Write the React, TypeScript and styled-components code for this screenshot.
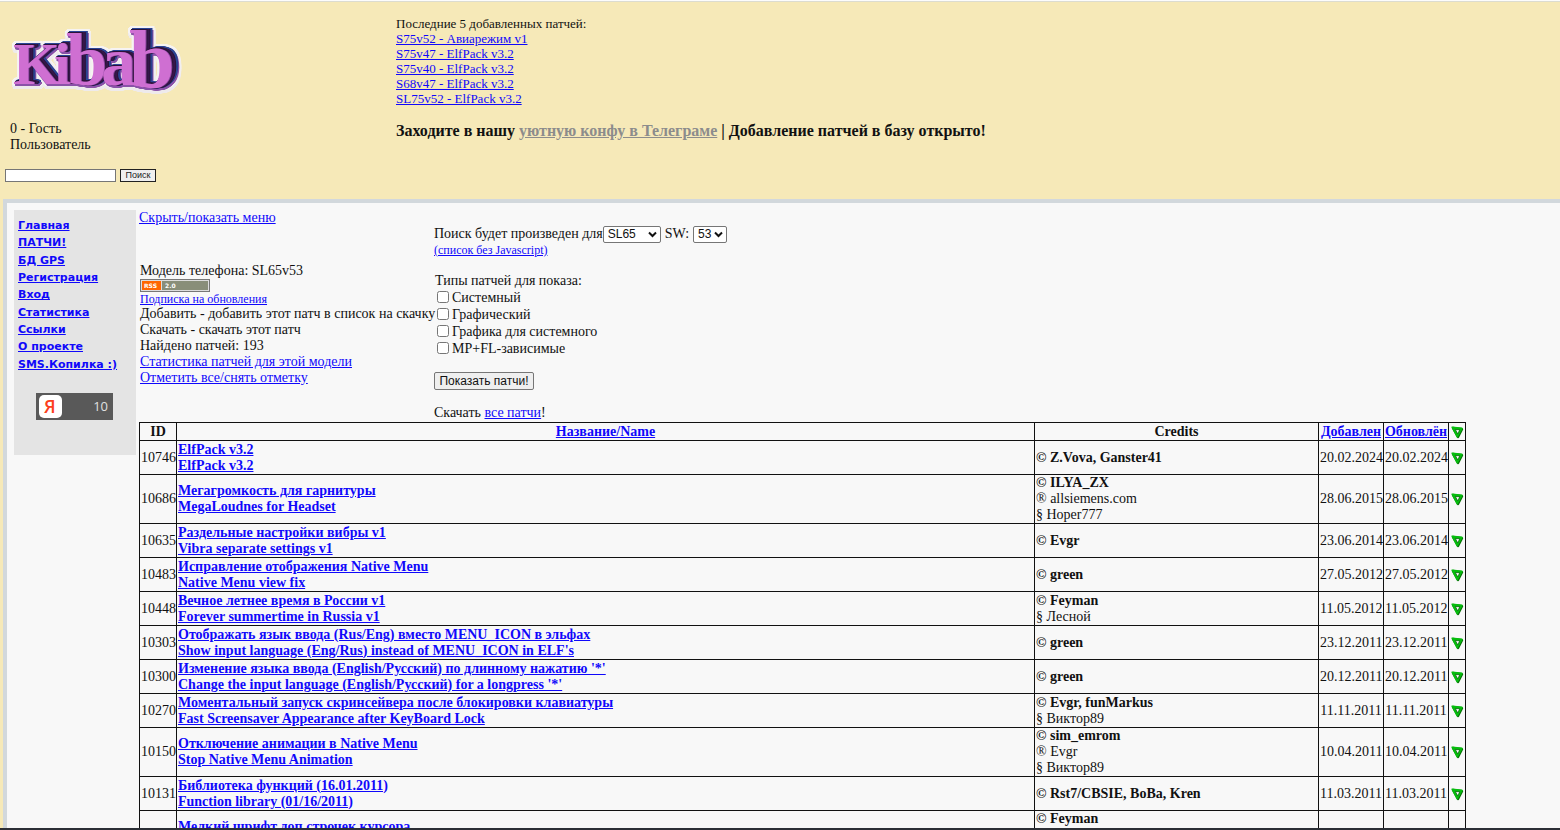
import React from "react";
import styled, { createGlobalStyle } from "styled-components";

const GlobalStyle = createGlobalStyle`
  * { box-sizing: border-box; }
  body {
    margin: 0;
    background: #f6e9b8;
    color: #111;
    font: 14px/16px "Liberation Serif", "Times New Roman", serif;
  }
`;

const Page = styled.div`
  height: 100vh;
  overflow: hidden;
  display: flex;
  flex-direction: column;
  border-top: 1px solid #fcfcfc;
  border-bottom: 2px solid #2c2f36;
`;

const Header = styled.header`
  flex: none;
  display: grid;
  grid-template-columns: 396px 1fr;
  height: 198px;
  border-top: 1px solid #dcdcd0;
`;

const Brand = styled.div`
  display: flex;
  flex-direction: column;
  align-items: flex-start;
  padding: 18px 0 0 5px;
`;

/* Stacked shadows build the dark side of the letters, then the pale halo. */
const LogoMark = styled.svg`
  display: block;
  overflow: visible;
  filter: drop-shadow(1px 0 0 #8a479f) drop-shadow(1px -1px 0 #2b1238)
    drop-shadow(2px 0 0 #35164a) drop-shadow(1px 0 0 #2b1238)
    drop-shadow(1px -1px 0 #2a4596) drop-shadow(1px 0 0 #2a3f8c)
    drop-shadow(1px 2px 0 #8a52a8)
    drop-shadow(2px 0 0 #f1eef0) drop-shadow(-2px 0 0 #f6f3f2)
    drop-shadow(0 3px 0 #eeeaec) drop-shadow(0 -2px 0 #f6f3f2);
`;

const User = styled.p`
  margin: 18px 0 16px 5px;
`;

const SearchForm = styled.form`
  display: flex;
  gap: 4px;
`;

const SearchInput = styled.input`
  width: 111px;
  height: 13px;
  padding: 0 2px;
  border: 1px solid #767676;
  background: #fff;
  font: 9px "Liberation Sans", Arial, sans-serif;
`;

const SearchButton = styled.button`
  width: 36px;
  height: 13px;
  padding: 0;
  border: 1px solid #222;
  background: #efefef;
  color: #222;
  font: 9px/11px "Liberation Sans", Arial, sans-serif;
`;

const News = styled.div`
  padding-top: 14px;
  font-size: 13px;
  line-height: 15px;
`;

const NewsList = styled.ul`
  margin: 0;
  padding: 0;
  list-style: none;
`;

const Link = styled.a<{ $color?: string }>`
  color: ${(p) => p.$color ?? "#1008fb"};
  text-decoration: underline;
`;

const Announcement = styled.h3`
  margin: 16px 0 0;
  font-size: 16px;
  line-height: 18px;
`;

const Frame = styled.div`
  flex: 1;
  min-height: 0;
  margin-left: 3px;
  padding: 7px 0 0 7px;
  display: grid;
  grid-template-columns: 122px 1fr;
  gap: 3px;
  align-items: start;
  border-top: 4px solid #d2d8dc;
  border-left: 4px solid #d2d8dc;
  background: #f8f8f8;
`;

const Sidebar = styled.nav`
  height: 245px;
  padding: 7px 4px;
  background: #e4e4e4;
`;

const Menu = styled.ul`
  display: grid;
  grid-auto-rows: 1fr;
  height: 156px;
  margin: 0 0 20px;
  padding: 0;
  list-style: none;
  font: bold 11px/17px Verdana, "DejaVu Sans", sans-serif;
  white-space: nowrap;
`;

const Counter = styled.a`
  display: block;
  width: 77px;
  height: 27px;
  margin-left: 18px;
`;

const Main = styled.main`
  margin-right: 94px;
`;

const Intro = styled.div`
  display: grid;
  grid-template-columns: 295px 1fr;
`;

const Info = styled.div`
  white-space: nowrap;
`;

const Details = styled.div`
  display: flex;
  flex-direction: column;
  align-items: flex-start;
  padding: 37px 0 0 1px;
`;

const RssLink = styled.a`
  display: block;
  height: 13px;
`;

const SmallLink = styled(Link)`
  font-size: 12px;
  line-height: 14px;
`;

const Filters = styled.form`
  display: flex;
  flex-direction: column;
  align-items: flex-start;
  padding-top: 15px;
`;

const ModelRow = styled.div`
  display: flex;
  align-items: center;
  height: 18px;
`;

const SelectBox = styled.span<{ $width: number }>`
  position: relative;
  display: flex;
  width: ${(p) => p.$width}px;
  height: 17px;
`;

const Select = styled.select`
  appearance: none;
  width: 100%;
  padding: 0 0 0 4px;
  border: 1px solid #767676;
  border-radius: 2px;
  background: #fff;
  color: #111;
  font: 12px/15px "Liberation Sans", Arial, sans-serif;
`;

const Chevron = styled.svg`
  position: absolute;
  top: 5px;
  right: 4px;
  pointer-events: none;
`;

const SoftwareLabel = styled.label`
  margin: 0 4px;
`;

const Types = styled.fieldset`
  margin: 16px 0 15px;
  padding: 0;
  border: 0;
`;

const Legend = styled.legend`
  padding: 0 1px;
`;

const Check = styled.label`
  display: flex;
  align-items: center;
  gap: 3px;
  height: 17px;
`;

const Checkbox = styled.input`
  width: 12px;
  height: 12px;
  margin: 0 0 2px 3px;
`;

const ShowButton = styled.button`
  width: 100px;
  height: 18px;
  padding: 0;
  border: 1px solid #767676;
  border-radius: 2px;
  background: #efefef;
  color: #111;
  font: 12px/14px "Liberation Sans", Arial, sans-serif;
`;

const DownloadAll = styled.p`
  margin: 15px 0 1px;
`;

const Table = styled.table`
  width: 100%;
  table-layout: fixed;
  border-collapse: collapse;
`;

const Col = styled.col<{ $width?: string }>`
  width: ${(p) => p.$width ?? "auto"};
`;

const Row = styled.tr<{ $head?: boolean }>`
  height: ${(p) => (p.$head ? 18 : 34)}px;
`;

const Cell = styled.td<{ $center?: boolean }>`
  padding: 0 1px;
  border: 1px solid #111;
  white-space: nowrap;
  text-align: ${(p) => (p.$center ? "center" : "left")};
`;

const HeadCell = styled.th`
  padding: 0;
  border: 1px solid #111;
`;

const Line = styled.div<{ $bold?: boolean }>`
  font-weight: ${(p) => (p.$bold ? "bold" : "normal")};
`;

const Icon = styled.svg`
  display: block;
  margin: 0 auto;
`;

const latest = [
  "S75v52 - Авиарежим v1",
  "S75v47 - ElfPack v3.2",
  "S75v40 - ElfPack v3.2",
  "S68v47 - ElfPack v3.2",
  "SL75v52 - ElfPack v3.2",
];

const menu = ["Главная", "ПАТЧИ!", "БД GPS", "Регистрация", "Вход", "Статистика", "Ссылки", "О проекте", "SMS.Копилка :)"];

const types = ["Системный", "Графический", "Графика для системного", "MP+FL-зависимые"];

interface Patch {
  id: number;
  ru: string;
  en: string;
  author: string;
  extra?: string[];
  added: string;
}

const patches: Patch[] = [
  { id: 10746, ru: "ElfPack v3.2", en: "ElfPack v3.2", author: "Z.Vova, Ganster41", added: "20.02.2024" },
  { id: 10686, ru: "Мегагромкость для гарнитуры", en: "MegaLoudnes for Headset", author: "ILYA_ZX", extra: ["® allsiemens.com", "§ Hoper777"], added: "28.06.2015" },
  { id: 10635, ru: "Раздельные настройки вибры v1", en: "Vibra separate settings v1", author: "Evgr", added: "23.06.2014" },
  { id: 10483, ru: "Исправление отображения Native Menu", en: "Native Menu view fix", author: "green", added: "27.05.2012" },
  { id: 10448, ru: "Вечное летнее время в России v1", en: "Forever summertime in Russia v1", author: "Feyman", extra: ["§ Лесной"], added: "11.05.2012" },
  { id: 10303, ru: "Отображать язык ввода (Rus/Eng) вместо MENU_ICON в эльфах", en: "Show input language (Eng/Rus) instead of MENU_ICON in ELF's", author: "green", added: "23.12.2011" },
  { id: 10300, ru: "Изменение языка ввода (English/Русский) по длинному нажатию '*'", en: "Change the input language (English/Русский) for a longpress '*'", author: "green", added: "20.12.2011" },
  { id: 10270, ru: "Моментальный запуск скринсейвера после блокировки клавиатуры", en: "Fast Screensaver Appearance after KeyBoard Lock", author: "Evgr, funMarkus", extra: ["§ Виктор89"], added: "11.11.2011" },
  { id: 10150, ru: "Отключение анимации в Native Menu", en: "Stop Native Menu Animation", author: "sim_emrom", extra: ["® Evgr", "§ Виктор89"], added: "10.04.2011" },
  { id: 10131, ru: "Библиотека функций (16.01.2011)", en: "Function library (01/16/2011)", author: "Rst7/CBSIE, BoBa, Kren", added: "11.03.2011" },
  { id: 10127, ru: "Мелкий шрифт доп строчек курсора", en: "Small font of cursor lines", author: "Feyman", extra: ["® Evgr", "§ Виктор89"], added: "09.03.2011" },
];

const letters = [
  { ch: "K", x: 8, y: 64, size: 60 },
  { ch: "i", x: 49, y: 64, size: 60 },
  { ch: "b", x: 61, y: 65, size: 74 },
  { ch: "a", x: 96, y: 65, size: 70 },
  { ch: "b", x: 124, y: 67, size: 82 },
];

function Logo() {
  return (
    <LogoMark width="182" height="83" viewBox="0 0 182 83" role="img" aria-label="Kibab">
      <text fontFamily="Liberation Serif, serif" fontWeight="bold" fill="#cf6fd2">
        {letters.map((l, i) => (
          <tspan key={i} x={l.x} y={l.y} fontSize={l.size}>{l.ch}</tspan>
        ))}
      </text>
    </LogoMark>
  );
}

function PatchMark() {
  return (
    <Icon width="14" height="14" viewBox="0 0 14 14" aria-hidden>
      <path d="M3 3 L12 4.2 L8 12 Z" fill="none" stroke="#067006" strokeWidth="2.4" strokeLinejoin="round" />
      <path d="M2.2 2.2 L11.8 3.4 L7.2 11.6 Z" fill="#06bd0e" stroke="#06bd0e" strokeWidth="1.6" strokeLinejoin="round" />
      <path d="M5.4 4.4 L9.8 4.9 L7.6 8.8 Z" fill="#fff" stroke="#075507" strokeWidth="0.7" />
    </Icon>
  );
}

function RssBadge() {
  return (
    <svg width="70" height="13" viewBox="0 0 70 13" role="img" aria-label="RSS 2.0">
      <rect x="0.5" y="0.5" width="69" height="12" fill="#ddd" stroke="#777" />
      <rect x="2" y="2" width="19" height="9" fill="#ff6600" />
      <rect x="22" y="2" width="46" height="9" fill="#898e79" />
      <g fill="#fff" fontFamily="DejaVu Sans, sans-serif" fontSize="6" fontWeight="bold">
        <text x="4" y="9">RSS</text>
        <text x="25" y="9">2.0</text>
      </g>
    </svg>
  );
}

function YandexCounter() {
  return (
    <svg width="77" height="27" viewBox="0 0 77 27" role="img" aria-label="Яндекс 10">
      <rect width="77" height="27" fill="#595959" />
      <rect x="3" y="2" width="23" height="23" rx="5" fill="#fff" />
      <text x="8" y="20" fill="#fc3f1d" fontFamily="Open Sans, sans-serif" fontSize="18" fontWeight="600">Я</text>
      <text x="72" y="18" textAnchor="end" fill="#e0e0e0" fontFamily="Open Sans, sans-serif" fontSize="13">10</text>
    </svg>
  );
}

function DropDown({ id, width, value }: { id: string; width: number; value: string }) {
  return (
    <SelectBox $width={width}>
      <Select id={id}><option>{value}</option></Select>
      <Chevron width="9" height="7" viewBox="0 0 9 7" aria-hidden>
        <path d="M1 1.5 L4.5 5 L8 1.5" fill="none" stroke="#111" strokeWidth="2" />
      </Chevron>
    </SelectBox>
  );
}

export default function App() {
  return (
    <>
      <GlobalStyle />
      <Page>
        <Header>
          <Brand>
            <Logo />
            <User>
              0 - Гость
              <br />
              Пользователь
            </User>
            <SearchForm>
              <SearchInput type="text" aria-label="Поиск" />
              <SearchButton type="button">Поиск</SearchButton>
            </SearchForm>
          </Brand>
          <News>
            Последние 5 добавленных патчей:
            <NewsList>
              {latest.map((name) => (
                <li key={name}><Link href="#">{name}</Link></li>
              ))}
            </NewsList>
            <Announcement>
              Заходите в нашу <Link href="#" $color="#8c8c8c">уютную конфу в Телеграме</Link> | Добавление патчей в базу открыто!
            </Announcement>
          </News>
        </Header>
        <Frame>
          <Sidebar>
            <Menu>
              {menu.map((item) => (
                <li key={item}><Link href="#">{item}</Link></li>
              ))}
            </Menu>
            <Counter href="#"><YandexCounter /></Counter>
          </Sidebar>
          <Main>
            <Intro>
              <Info>
                <Link href="#">Скрыть/показать меню</Link>
                <Details>
                  <span>Модель телефона: SL65v53</span>
                  <RssLink href="#"><RssBadge /></RssLink>
                  <SmallLink href="#">Подписка на обновления</SmallLink>
                  <span>Добавить - добавить этот патч в список на скачку</span>
                  <span>Скачать - скачать этот патч</span>
                  <span>Найдено патчей: 193</span>
                  <Link href="#">Статистика патчей для этой модели</Link>
                  <Link href="#">Отметить все/снять отметку</Link>
                </Details>
              </Info>
              <Filters>
                <ModelRow>
                  <label htmlFor="model">Поиск будет произведен для</label>
                  <DropDown id="model" width={58} value="SL65" />
                  <SoftwareLabel htmlFor="sw">SW:</SoftwareLabel>
                  <DropDown id="sw" width={34} value="53" />
                </ModelRow>
                <SmallLink href="#">(список без Javascript)</SmallLink>
                <Types>
                  <Legend>Типы патчей для показа:</Legend>
                  {types.map((type) => (
                    <Check key={type}><Checkbox type="checkbox" />{type}</Check>
                  ))}
                </Types>
                <ShowButton type="button">Показать патчи!</ShowButton>
                <DownloadAll>Скачать <Link href="#">все патчи</Link>!</DownloadAll>
              </Filters>
            </Intro>
            <Table>
              <colgroup>
                <Col $width="37px" />
                <Col />
                <Col $width="284px" />
                <Col $width="65px" />
                <Col $width="65px" />
                <Col $width="17px" />
              </colgroup>
              <thead>
                <Row $head>
                  <HeadCell>ID</HeadCell>
                  <HeadCell><Link href="#">Название/Name</Link></HeadCell>
                  <HeadCell>Credits</HeadCell>
                  <HeadCell><Link href="#">Добавлен</Link></HeadCell>
                  <HeadCell><Link href="#">Обновлён</Link></HeadCell>
                  <HeadCell><PatchMark /></HeadCell>
                </Row>
              </thead>
              <tbody>
                {patches.map((p) => (
                  <Row key={p.id}>
                    <Cell $center>{p.id}</Cell>
                    <Cell>
                      <Line $bold><Link href="#">{p.ru}</Link></Line>
                      <Line $bold><Link href="#">{p.en}</Link></Line>
                    </Cell>
                    <Cell>
                      <Line $bold>© {p.author}</Line>
                      {p.extra?.map((e) => <Line key={e}>{e}</Line>)}
                    </Cell>
                    <Cell $center>{p.added}</Cell>
                    <Cell $center>{p.added}</Cell>
                    <Cell $center><PatchMark /></Cell>
                  </Row>
                ))}
              </tbody>
            </Table>
          </Main>
        </Frame>
      </Page>
    </>
  );
}
